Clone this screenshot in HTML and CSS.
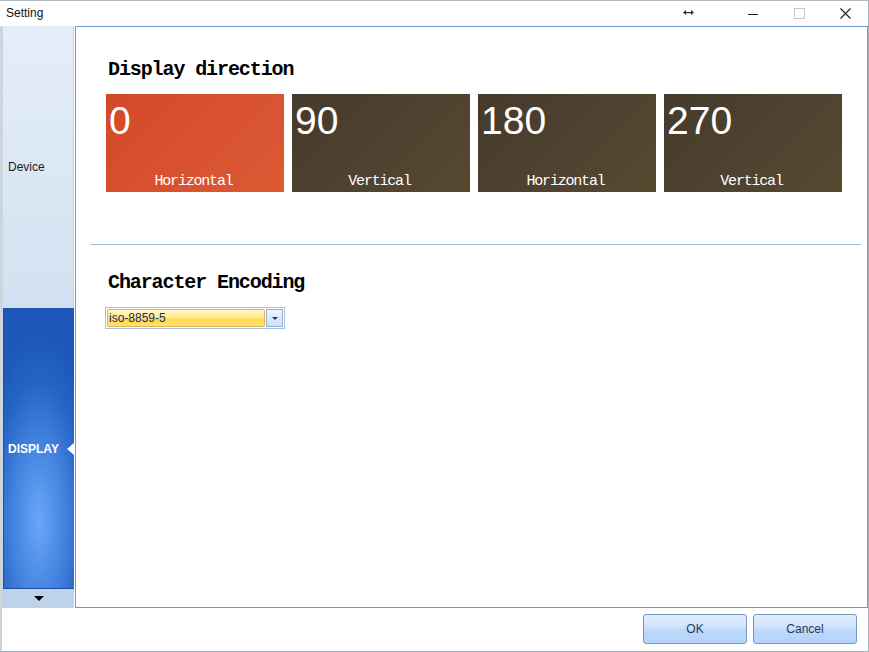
FILE: index.html
```html
<!DOCTYPE html>
<html>
<head>
<meta charset="utf-8">
<title>Setting</title>
<link rel="stylesheet" href="styles.css">
</head>
<body>
<div class="window">
  <div class="titlebar">
    <span class="title">Setting</span>
    <span class="spacer"></span>
    <span class="ctl-resize">
      <svg width="11" height="5" viewBox="0 0 11 5"><path d="M0 2.5 L3 0 L3 5 Z M8 0 L11 2.5 L8 5 Z" fill="#2b2b2b"/><rect x="2" y="2" width="7" height="1.2" fill="#2b2b2b"/></svg>
    </span>
    <span class="ctl">
      <svg width="10" height="10" viewBox="0 0 10 10"><rect x="0" y="5" width="10" height="1" fill="#1a1a1a"/></svg>
    </span>
    <span class="ctl">
      <svg width="11" height="11" viewBox="0 0 11 11"><rect x="0.5" y="0.5" width="10" height="10" fill="none" stroke="#c6c6c6" stroke-width="1"/></svg>
    </span>
    <span class="ctl">
      <svg width="11" height="11" viewBox="0 0 11 11"><path d="M0.5 0.5 L10.5 10.5 M10.5 0.5 L0.5 10.5" stroke="#1a1a1a" stroke-width="1.1" fill="none"/></svg>
    </span>
  </div>

  <div class="main">
    <div class="edge"></div>
    <nav class="sidebar">
      <div class="nav-item nav-device">Device</div>
      <div class="nav-item nav-display">
        <span>DISPLAY</span>
        <span class="caret"></span>
      </div>
      <div class="nav-more"><span class="down"></span></div>
    </nav>
    <div class="gutter"></div>
    <section class="panel">
      <div class="section">
        <h2 class="heading">Display direction</h2>
        <div class="tiles">
          <div class="tile tile-active">
            <div class="tile-num">0</div>
            <div class="tile-label">Horizontal</div>
          </div>
          <div class="tile">
            <div class="tile-num">90</div>
            <div class="tile-label">Vertical</div>
          </div>
          <div class="tile">
            <div class="tile-num">180</div>
            <div class="tile-label">Horizontal</div>
          </div>
          <div class="tile">
            <div class="tile-num">270</div>
            <div class="tile-label">Vertical</div>
          </div>
        </div>
      </div>
      <div class="separator"></div>
      <div class="section section-enc">
        <h2 class="heading">Character Encoding</h2>
        <div class="combo">
          <div class="combo-field">iso-8859-5</div>
          <div class="combo-btn"><span class="combo-arrow"></span></div>
        </div>
      </div>
    </section>
  </div>

  <div class="footer">
    <button class="btn">OK</button>
    <button class="btn">Cancel</button>
  </div>
</div>
</body>
</html>
```

FILE: styles.css
```css
html, body {
  margin: 0;
  padding: 0;
  background: #ffffff;
}

.window {
  width: 869px;
  height: 652px;
  box-sizing: border-box;
  border-top: 1px solid #b3bbc5;
  border-right: 1px solid #a9b1bb;
  border-bottom: 1px solid #a9b1bb;
  display: flex;
  flex-direction: column;
  background: #ffffff;
  font-family: "Liberation Sans", Arial, sans-serif;
}

/* Title bar */
.titlebar {
  height: 25px;
  display: flex;
  align-items: center;
  flex: none;
}
.title {
  padding-left: 6px;
  font-size: 12px;
  color: #111;
  margin-top: -1px;
}
.spacer { flex: 1; }
.ctl-resize {
  display: flex;
  width: 11px;
  margin-right: 36px;
  margin-top: -3px;
}
.ctl {
  width: 46px;
  height: 25px;
  display: flex;
  align-items: center;
  justify-content: center;
}

/* Main area */
.main {
  height: 582px;
  display: flex;
  flex: none;
}
.edge {
  width: 3px;
  background: #cdd5de;
  flex: none;
}
.sidebar {
  width: 71px;
  flex: none;
  display: flex;
  flex-direction: column;
}
.gutter {
  width: 1px;
  flex: none;
  background: #ffffff;
}
.nav-item {
  display: flex;
  align-items: center;
  box-sizing: border-box;
  font-size: 12px;
  padding-left: 5px;
}
.nav-device {
  height: 282px;
  background: linear-gradient(#e4eef8, #d2e1f1);
  border-right: 1px solid #c5d2e0;
  color: #1b1b1b;
}
.nav-display {
  height: 281px;
  justify-content: space-between;
  color: #ffffff;
  font-weight: bold;
  border: 1px solid #1b50ab;
  border-right: none;
  padding-left: 4px;
  background: radial-gradient(ellipse 62px 190px at 50% 76%, #6aa8f8 0%, #4584e0 40%, #2463c4 75%, #1c57b9 100%);
}
.caret {
  width: 0;
  height: 0;
  border-top: 6px solid transparent;
  border-bottom: 6px solid transparent;
  border-right: 7px solid #ffffff;
  margin-top: 1px;
}
.nav-more {
  height: 19px;
  background: #bed2ea;
  display: flex;
  justify-content: center;
  padding-top: 7px;
  box-sizing: border-box;
}
.down {
  width: 0;
  height: 0;
  border-left: 5px solid transparent;
  border-right: 5px solid transparent;
  border-top: 5px solid #000000;
  margin-left: 1px;
}

/* Panel */
.panel {
  flex: 1;
  box-sizing: border-box;
  border: 1px solid #6e9ad4;
  background: #ffffff;
  padding-top: 31px;
}
.section {
  padding-left: 30px;
}
.heading {
  margin: 0 0 12px 0;
  padding-left: 2px;
  font-family: "Liberation Mono", "Courier New", monospace;
  font-weight: bold;
  font-size: 20px;
  line-height: 24px;
  letter-spacing: -1.1px;
  color: #000000;
}
.tiles {
  display: flex;
  gap: 8px;
}
.tile {
  width: 178px;
  height: 98px;
  box-sizing: border-box;
  padding: 7px 0 3px 3px;
  display: flex;
  flex-direction: column;
  color: #ffffff;
  background: linear-gradient(135deg, #463a2b 0%, #4f4230 55%, #57492f 100%);
}
.tile-active {
  background: linear-gradient(135deg, #d4482a 0%, #d85230 55%, #dd5a34 100%);
}
.tile-num {
  font-family: "Liberation Sans", Arial, sans-serif;
  font-size: 39px;
  line-height: 39px;
}
.tile-label {
  margin-top: auto;
  text-align: center;
  padding-right: 6px;
  font-family: "Liberation Mono", "Courier New", monospace;
  font-size: 15px;
  line-height: 15px;
  letter-spacing: -1.2px;
}

.separator {
  height: 1px;
  background: #9dbad9;
  margin: 52px 6px 0 14px;
}
.section-enc {
  padding-top: 26px;
}
.section-enc .heading {
  margin-bottom: 12px;
}

.combo {
  width: 180px;
  height: 22px;
  box-sizing: border-box;
  margin-left: -1px;
  border: 1px solid #a9c1e0;
  padding: 1px;
  display: flex;
  gap: 1px;
  background: #ffffff;
}
.combo-field {
  flex: 1;
  border: 1px solid #dcb35a;
  border-radius: 2px;
  padding-left: 1px;
  font-size: 12px;
  line-height: 16px;
  color: #1a2a62;
  background: linear-gradient(#fff6c4 0%, #ffeb94 45%, #ffd94a 60%, #ffe27a 100%);
}
.combo-btn {
  width: 17px;
  box-sizing: border-box;
  border: 1px solid #94b0d8;
  background: linear-gradient(#eef4fc, #cddff5);
  display: flex;
  align-items: center;
  justify-content: center;
}
.combo-arrow {
  width: 0;
  height: 0;
  border-left: 3px solid transparent;
  border-right: 3px solid transparent;
  border-top: 3px solid #1f3a6a;
  margin-top: 1px;
}

/* Footer */
.footer {
  flex: 1;
  display: flex;
  justify-content: flex-end;
  align-items: flex-start;
  gap: 6px;
  padding: 6px 11px 0 0;
  border-left: 2px solid #cdd2d8;
  background: #ffffff;
}
.btn {
  width: 104px;
  height: 30px;
  margin: 0;
  padding: 0;
  border: 1px solid #7898c4;
  border-radius: 3px;
  font-family: "Liberation Sans", Arial, sans-serif;
  font-size: 12px;
  color: #1e3a5f;
  background: linear-gradient(#e3eefc 0%, #cfe2fb 45%, #bcd8fa 55%, #b5d3fa 100%);
}
```
